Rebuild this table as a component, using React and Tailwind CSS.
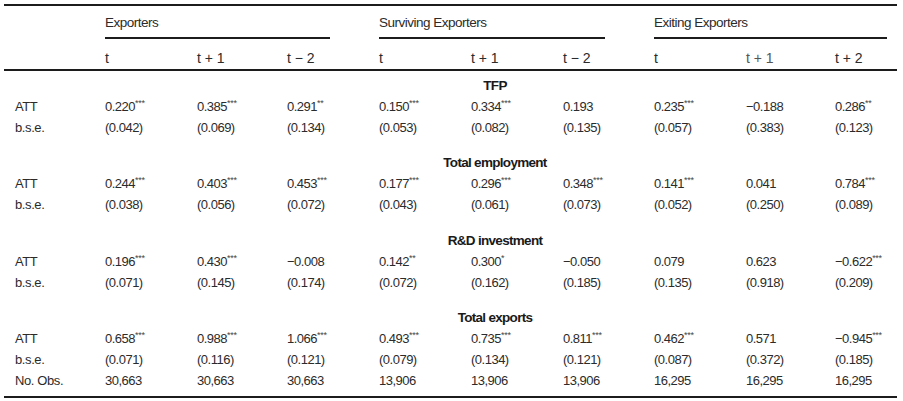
const GRID =
  "grid grid-cols-[101px_92px_90px_92px_92px_92px_91px_92px_89px_1fr]";

const sections = [
  {
    title: "TFP",
    rows: [
      ["ATT", ["0.220", "***"], ["0.385", "***"], ["0.291", "**"], ["0.150", "***"], ["0.334", "***"], ["0.193", ""], ["0.235", "***"], ["\u22120.188", ""], ["0.286", "**"]],
      ["b.s.e.", "(0.042)", "(0.069)", "(0.134)", "(0.053)", "(0.082)", "(0.135)", "(0.057)", "(0.383)", "(0.123)"],
    ],
  },
  {
    title: "Total employment",
    rows: [
      ["ATT", ["0.244", "***"], ["0.403", "***"], ["0.453", "***"], ["0.177", "***"], ["0.296", "***"], ["0.348", "***"], ["0.141", "***"], ["0.041", ""], ["0.784", "***"]],
      ["b.s.e.", "(0.038)", "(0.056)", "(0.072)", "(0.043)", "(0.061)", "(0.073)", "(0.052)", "(0.250)", "(0.089)"],
    ],
  },
  {
    title: "R&D investment",
    rows: [
      ["ATT", ["0.196", "***"], ["0.430", "***"], ["\u22120.008", ""], ["0.142", "**"], ["0.300", "*"], ["\u22120.050", ""], ["0.079", ""], ["0.623", ""], ["\u22120.622", "***"]],
      ["b.s.e.", "(0.071)", "(0.145)", "(0.174)", "(0.072)", "(0.162)", "(0.185)", "(0.135)", "(0.918)", "(0.209)"],
    ],
  },
  {
    title: "Total exports",
    rows: [
      ["ATT", ["0.658", "***"], ["0.988", "***"], ["1.066", "***"], ["0.493", "***"], ["0.735", "***"], ["0.811", "***"], ["0.462", "***"], ["0.571", ""], ["\u22120.945", "***"]],
      ["b.s.e.", "(0.071)", "(0.116)", "(0.121)", "(0.079)", "(0.134)", "(0.121)", "(0.087)", "(0.372)", "(0.185)"],
      ["No. Obs.", "30,663", "30,663", "30,663", "13,906", "13,906", "13,906", "16,295", "16,295", "16,295"],
    ],
  },
];

function Cell({ value }) {
  if (Array.isArray(value)) {
    return (
      <div className="text-[13px] tracking-[-0.5px]">
        {value[0]}
        {value[1] && (
          <sup className="text-[9px] tracking-[-0.3px] top-[-0.6em] text-[#444]">{value[1]}</sup>
        )}
      </div>
    );
  }
  return <div className="text-[13px] tracking-[-0.5px]">{value}</div>;
}

function Row({ row }) {
  const [label, ...cells] = row;
  return (
    <div className={`${GRID} h-[21px] leading-[21px]`}>
      <div className="pl-[11px] text-[13px] tracking-[-0.4px]">{label}</div>
      {cells.map((c, i) => (
        <Cell key={i} value={c} />
      ))}
      <div />
    </div>
  );
}

export default function App() {
  const groups = [
    { name: "Exporters", gap: "mr-[49px]" },
    { name: "Surviving Exporters", gap: "mr-[49px]" },
    { name: "Exiting Exporters", gap: "mr-[10px]" },
  ];
  const periods = ["t", "t + 1", "t \u2212 2", "t", "t + 1", "t \u2212 2", "t", "t + 1", "t + 2"];

  return (
    <div className="w-[903px] h-[401px] bg-white pt-[4px] px-[4px] text-[#2b2b2b] font-['Liberation_Sans',Arial,sans-serif]">
      <div className="w-[893px]">
        {/* top rule */}
        <div className="h-[2px] bg-[#1c1c1c]" />

        {/* group headers */}
        <div className={GRID}>
          <div />
          {groups.map((g) => (
            <div key={g.name} className="col-span-3 flex flex-col">
              <div className="h-[31px] pt-[9px] leading-[16px] text-[13.5px] tracking-[-0.5px]">
                {g.name}
              </div>
              <div className={`h-[2px] bg-[#1c1c1c] ${g.gap}`} />
            </div>
          ))}
        </div>

        {/* period headers */}
        <div className={`${GRID} h-[30px] pt-[11px] leading-[16px] text-[14px]`}>
          <div />
          {periods.map((p, i) => (
            <div key={i} className={i === 7 ? "text-[#555]" : ""}>
              {p}
            </div>
          ))}
        </div>
        <div className="h-[2px] bg-[#1c1c1c]" />

        {/* body */}
        <div className="mt-[4px] flex flex-col">
          {sections.map((s, si) => (
            <div key={s.title} className={si === 0 ? "" : si === 2 ? "mt-[15px]" : "mt-[14px]"}>
              <div className="h-[21px] leading-[21px] pl-[101px] pr-[12px] text-center text-[13.5px] tracking-[-0.7px] font-bold text-[#1a1a1a]">
                {s.title}
              </div>
              {s.rows.map((r, ri) => (
                <Row key={ri} row={r} />
              ))}
            </div>
          ))}
        </div>

        {/* bottom rule */}
        <div className="mt-[5px] h-[2px] bg-[#1c1c1c]" />
      </div>
    </div>
  );
}
